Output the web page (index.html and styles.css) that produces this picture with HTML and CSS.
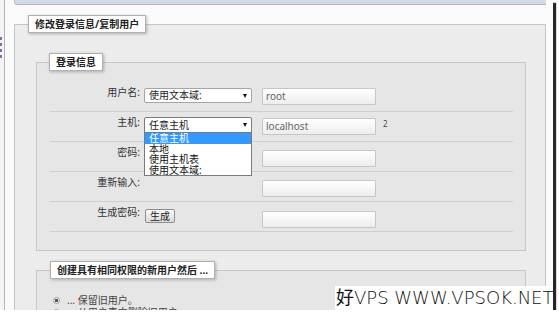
FILE: index.html
```html
<!DOCTYPE html>
<html lang="zh-CN">
<head>
  <meta charset="UTF-8">
  <title>修改登录信息/复制用户</title>
  <link rel="stylesheet" href="styles.css">
</head>
<body>

  <div class="shot">
    <div class="nav-edge"><i></i><i></i><i></i><i></i></div>

    <div class="main">
      <div class="topbar"></div>

      <fieldset class="outer">
        <legend>修改登录信息/复制用户</legend>

        <fieldset class="group">
          <legend>登录信息</legend>

          <div class="row">
            <span class="label">用户名:</span>
            <div class="control">
              <div class="select">使用文本域:<span class="arrow"></span></div>
            </div>
            <div class="field">root</div>
          </div>

          <div class="row">
            <span class="label">主机:</span>
            <div class="control">
              <div class="select open">任意主机<span class="arrow"></span>
                <div class="options">
                  <div class="on">任意主机</div>
                  <div>本地</div>
                  <div>使用主机表</div>
                  <div>使用文本域:</div>
                </div>
              </div>
            </div>
            <div class="field">localhost</div>
            <span class="note">2</span>
          </div>

          <div class="row">
            <span class="label">密码:</span>
            <div class="control"></div>
            <div class="field low"></div>
          </div>

          <div class="row">
            <span class="label">重新输入:</span>
            <div class="control"></div>
            <div class="field low"></div>
          </div>

          <div class="row">
            <span class="label">生成密码:</span>
            <div class="control">
              <button class="button">生成</button>
            </div>
            <div class="field lower"></div>
          </div>
        </fieldset>

        <fieldset class="group after">
          <legend>创建具有相同权限的新用户然后 ...</legend>
          <div class="choice"><span class="radio checked"></span>... 保留旧用户。</div>
          <div class="choice"><span class="radio"></span>... 从用户表中删除旧用户。</div>
        </fieldset>
      </fieldset>
    </div>

    <div class="watermark">好VPS WWW.VPSOK.NET</div>
  </div>

</body>
</html>
```

FILE: styles.css
```css
body {
  margin: 0;
  background-color: #fff;
  font-family: "Noto Sans", "Noto Sans CJK SC", sans-serif;
  font-size: 10px;
  color: #333;
}

.shot {
  position: relative;
  display: flex;
  width: 553px;
  height: 310px;
  background-color: #fafafa;
  box-shadow: 3px 3px 1px rgba(0, 0, 0, 0.85);
  overflow: hidden;
}

/* cut-off edge of the navigation tree */
.nav-edge {
  flex: none;
  display: flex;
  flex-direction: column;
  gap: 3px;
  width: 4px;
  padding-top: 37px;
  background-color: #f4f4f4;
  border-right: 1px solid #b5b5b5;
}

.nav-edge i {
  display: block;
  width: 2px;
  height: 3px;
  background-color: #8b6aa8;
}

.main {
  flex: 1;
  padding: 0 7px 0 9px;
}

.topbar {
  height: 4px;
  background-color: #d3dbe6;
  border-left: 1px solid #b8c0cc;
  border-bottom: 1px solid #aeb7c3;
  border-radius: 0 0 0 3px;
}

fieldset {
  margin: 0;
  padding: 0;
  min-width: 0;
  border: 1px solid #c6c6c6;
}

legend {
  padding: 0 6px;
  background-color: #fff;
  border: 1px solid #b0b0b0;
  box-shadow: 1px 1px 3px rgba(0, 0, 0, 0.25);
  font-weight: bold;
  line-height: 16px;
  color: #222;
}

.outer {
  margin-top: 10px;
  height: 400px;
  background-color: #ececec;
}

.outer > legend {
  margin-left: 13px;
}

.group {
  box-sizing: border-box;
  width: 490px;
  margin: 20px 0 0 21px;
  padding: 11px 0 18px;
  background-color: #e6e6e6;
}

.group > legend {
  margin-left: 12px;
}

.row {
  box-sizing: border-box;
  display: flex;
  align-items: flex-start;
  height: 30px;
  margin: 0 12px 0 13px;
  padding-top: 6px;
  border-bottom: 1px solid #cfcfcf;
}

.label {
  flex: none;
  width: 90px;
  margin-top: -3px;
  text-align: right;
  line-height: 14px;
}

.control {
  flex: none;
  width: 108px;
  margin-left: 4px;
}

.select {
  position: relative;
  box-sizing: border-box;
  display: flex;
  justify-content: space-between;
  align-items: center;
  height: 15px;
  padding: 0 4px;
  background-color: #fff;
  border: 1px solid #a5a5a5;
  border-radius: 2px;
  line-height: 13px;
  color: #222;
}

.select.open {
  margin-top: -1px;
  height: 16px;
  border-color: #7a7a7a;
  border-radius: 2px 2px 0 0;
}

.arrow {
  width: 0;
  height: 0;
  border-left: 2.5px solid transparent;
  border-right: 2.5px solid transparent;
  border-top: 4px solid #111;
}

.options {
  position: absolute;
  z-index: 2;
  top: 100%;
  left: -1px;
  box-sizing: border-box;
  width: 108px;
  background-color: #fff;
  border: 1px solid #7a7a7a;
}

.options div {
  padding: 0 4px;
  line-height: 10.5px;
  color: #111;
}

.options .on {
  background-color: #3399ff;
  color: #fff;
}

.field {
  box-sizing: border-box;
  width: 114px;
  height: 17px;
  margin: 0 0 0 10px;
  padding: 0 3px;
  background: linear-gradient(#fff, #ededed);
  border: 1px solid #c6c6c6;
  border-radius: 1px;
  line-height: 15px;
  color: #666;
}

.field.low {
  margin-top: 2px;
}

.field.lower {
  margin-top: 3px;
}

.note {
  margin: 0 0 0 7px;
  font-size: 8px;
  line-height: 12px;
  color: #444;
}

.button {
  box-sizing: border-box;
  height: 14px;
  margin: 1px 0 0 1px;
  padding: 0 4px;
  background: linear-gradient(#fafafa, #dadada);
  border: 1px solid #8e8e8e;
  border-radius: 2px;
  font-family: inherit;
  font-size: 10px;
  line-height: 12px;
  color: #222;
}

.group.after {
  margin-top: 10px;
  height: 80px;
  padding-top: 15px;
}

.group.after > legend {
  margin-left: 13px;
}

.choice {
  display: flex;
  align-items: center;
  gap: 7px;
  margin-left: 16px;
  line-height: 12px;
  color: #444;
}

.radio {
  box-sizing: border-box;
  width: 7px;
  height: 7px;
  background-color: #f4f4f4;
  border: 1px solid #9a9a9a;
  border-radius: 50%;
}

.radio.checked {
  background: radial-gradient(circle, #555 0 1.5px, #f4f4f4 2px);
}

.watermark {
  position: absolute;
  right: 0;
  bottom: 0;
  width: 218px;
  height: 24px;
  padding-left: 1px;
  box-sizing: border-box;
  background-color: #fff;
  font-family: "DejaVu Sans", sans-serif;
  font-weight: 200;
  font-size: 18px;
  line-height: 24px;
  color: #111;
  white-space: nowrap;
}
```
